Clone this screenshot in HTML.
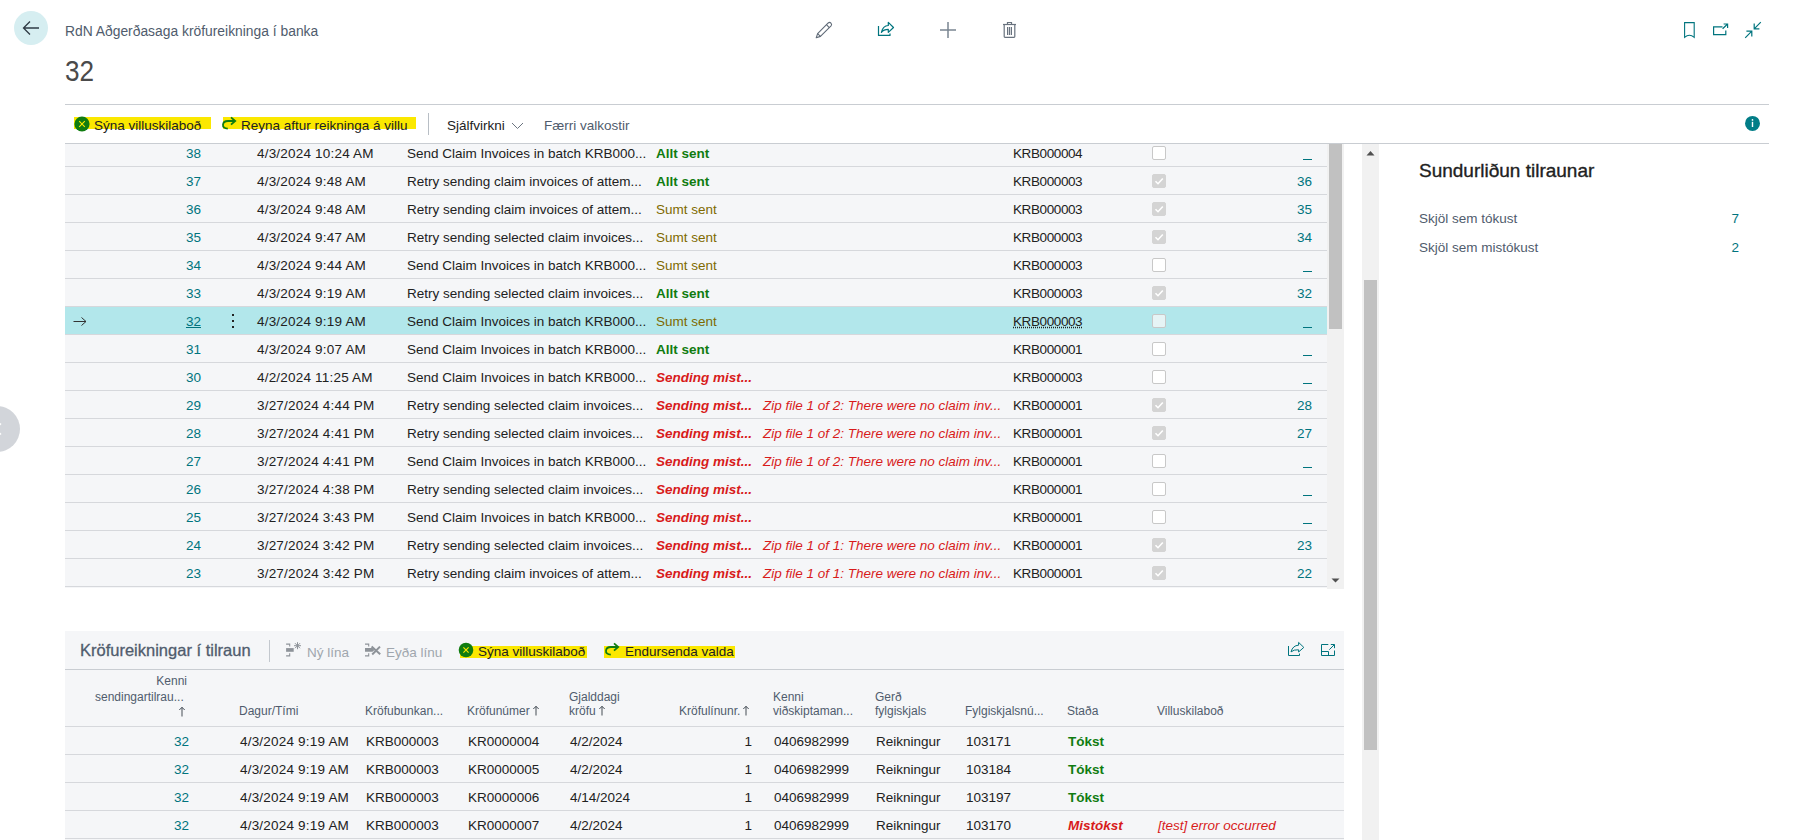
<!DOCTYPE html>
<html><head><meta charset="utf-8"><style>
*{box-sizing:border-box;margin:0;padding:0}
html,body{width:1795px;height:840px;overflow:hidden;background:#fff;font-family:"Liberation Sans",sans-serif;color:#212121}
.a{position:absolute;white-space:nowrap}
.t{font-size:13.5px}
.teal{color:#00747e}
.g{color:#107c10;font-weight:bold}
.o{color:#7f6a00}
.r{color:#d81b1b;font-weight:bold;font-style:italic}
.ri{color:#d81b1b;font-style:italic}
.row{position:absolute;left:65px;width:1262px;height:28px;background:#f5f6f8;border-bottom:1px solid #d6d8dc}
.row .c{position:absolute;top:1px;line-height:27px;font-size:13.5px;white-space:nowrap}
.rt{text-align:right}
.cb{position:absolute;width:14px;height:14px;border:1px solid #c8c8c8;border-radius:2px;background:#fff}
.cb.on{background:#d4d4d4;border-color:#d4d4d4}
.brow{position:absolute;left:65px;width:1279px;height:28px;border-bottom:1px solid #d6d8dc}
.brow .c{position:absolute;top:1px;line-height:27px;font-size:13.5px;white-space:nowrap}
.hd{position:absolute;font-size:12px;color:#505c6d;line-height:16px;white-space:nowrap}
.hl{background:#fbe800}
</style></head>
<body>
<div class="a" style="left:14px;top:11px;width:34px;height:34px;border-radius:50%;background:#d6eef1"></div>
<svg class="a" style="left:22px;top:20px" width="18" height="16" viewBox="0 0 18 16"><path d="M8 1.5 L1.5 8 L8 14.5 M1.5 8 H17" fill="none" stroke="#2f3b45" stroke-width="1.3"/></svg>
<div class="a" style="left:65px;top:22px;font-size:13.85px;line-height:18px;color:#505c6d">RdN Aðgerðasaga kröfureikninga í banka</div>
<div class="a" style="left:65px;top:54px;font-size:29px;line-height:34px;color:#4a4a4a;transform:scaleX(0.9);transform-origin:left">32</div>
<svg class="a" style="left:814px;top:20px" width="20" height="20" viewBox="0 0 20 20"><g fill="none" stroke="#5f6a77" stroke-width="1.1" stroke-linejoin="round"><path d="M2.2 17.8 L3.62 13.56 L14.22 2.96 A2 2 0 0 1 17.04 5.78 L6.44 16.38 Z"/><path d="M3.62 13.56 L6.44 16.38 M12.46 4.72 L15.28 7.54"/></g></svg>
<svg class="a" style="left:876px;top:20px" width="20" height="20" viewBox="0 0 20 20"><g fill="none" stroke="#00747e" stroke-width="1.2" stroke-linejoin="round"><path d="M2.5 6 V15.4 H14 V13.4"/><path d="M5.4 12.4 Q6.8 5.6 12.3 5.5 V2.4 L17.5 7.5 L12.3 12.4 V9.4 Q7.6 9.4 5.4 12.4 Z"/></g></svg>
<svg class="a" style="left:938px;top:20px" width="20" height="20" viewBox="0 0 20 20"><path d="M10 2 V18 M2 10 H18" stroke="#7a8591" stroke-width="1.5"/></svg>
<svg class="a" style="left:999px;top:20px" width="20" height="20" viewBox="0 0 20 20"><g fill="none" stroke="#68727e" stroke-width="1.2"><path d="M4 4.5 H17"/><path d="M8.5 4.5 V2.5 H12.5 V4.5"/><path d="M5.2 4.5 V16.6 Q5.2 17.4 6 17.4 H15 Q15.8 17.4 15.8 16.6 V4.5"/><path d="M8.6 7 V15 M10.5 7 V15 M12.4 7 V15"/></g></svg>
<svg class="a" style="left:1680px;top:20px" width="20" height="20" viewBox="0 0 20 20"><path d="M4.6 2.6 H14.2 V17.4 Q9.4 13.2 4.6 17.4 Z" fill="none" stroke="#00747e" stroke-width="1.1"/></svg>
<svg class="a" style="left:1710px;top:20px" width="20" height="20" viewBox="0 0 20 20"><g fill="none" stroke="#00747e" stroke-width="1.2"><path d="M12.5 6.8 H3.6 V14.6 H15.8 V10.5"/><path d="M12.6 8.8 L17.6 4 M13.6 4 H17.6 V8"/></g></svg>
<svg class="a" style="left:1743px;top:20px" width="20" height="20" viewBox="0 0 20 20"><g fill="none" stroke="#00747e" stroke-width="1.2"><path d="M2.2 17.8 L8.8 11.2 M3.4 11.2 H8.8 V16.4"/><path d="M17.8 2.2 L11.2 8.8 M11.2 3.6 V8.8 H16.4"/></g></svg>
<div class="a" style="left:65px;top:104px;width:1704px;height:1px;background:#c9cdd2"></div>
<div class="a hl" style="left:74px;top:117px;width:137px;height:12px"></div>
<svg class="a" style="left:74px;top:116px" width="16" height="16" viewBox="0 0 16 16"><circle cx="8" cy="8" r="7.6" fill="#107c10"/><path d="M5.2 5.2 L10.8 10.8 M10.8 5.2 L5.2 10.8" stroke="#ffea00" stroke-width="1.1"/></svg>
<div class="a t" style="left:94px;top:117px;line-height:18px">Sýna villuskilaboð</div>
<div class="a hl" style="left:223px;top:117px;width:193px;height:12px"></div>
<svg class="a" style="left:221px;top:116px" width="16" height="14" viewBox="0 0 16 14"><path d="M6.8 12.6 Q1.6 12.2 2 8.6 Q2.4 5 7 5 H13.2 M10 1.4 L14.2 5 L10 8.6" fill="none" stroke="#107c10" stroke-width="1.8"/></svg>
<div class="a t" style="left:241px;top:117px;line-height:18px">Reyna aftur reikninga á villu</div>
<div class="a" style="left:428px;top:113px;width:1px;height:22px;background:#b8bec5"></div>
<div class="a t" style="left:447px;top:117px;line-height:18px">Sjálfvirkni</div>
<svg class="a" style="left:511px;top:121px" width="13" height="9" viewBox="0 0 13 9"><path d="M1 2 L6.5 7.5 L12 2" fill="none" stroke="#6b7480" stroke-width="1"/></svg>
<div class="a t" style="left:544px;top:117px;line-height:18px;color:#505c6d">Færri valkostir</div>
<svg class="a" style="left:1744px;top:115px" width="17" height="17" viewBox="0 0 17 17"><circle cx="8.5" cy="8.4" r="7.5" fill="#027d87"/><rect x="7.8" y="6.8" width="1.4" height="5.2" fill="#fff"/><circle cx="8.5" cy="4.9" r="0.85" fill="#fff"/></svg>
<div class="a" style="left:65px;top:143px;width:1704px;height:1px;background:#c9cdd2"></div>
<div class="a" style="left:65px;top:144px;width:1262px;height:444px;overflow:hidden;background:#f5f6f8">
<div class="row" style="left:0;top:-5px;">
<div class="c rt teal" style="left:80px;width:56px;">38</div>
<div class="c" style="left:192px;letter-spacing:0.2px">4/3/2024 10:24 AM</div>
<div class="c" style="left:342px">Send Claim Invoices in batch KRB000...</div>
<div class="c g" style="left:591px">Allt sent</div>
<div class="c" style="left:948px;letter-spacing:-0.4px;">KRB000004</div>
<div class="cb " style="left:1087px;top:7px;"></div>
<div class="a" style="left:1238px;top:20px;width:9px;height:1.4px;background:#00747e"></div>
</div>
<div class="row" style="left:0;top:23px;">
<div class="c rt teal" style="left:80px;width:56px;">37</div>
<div class="c" style="left:192px;letter-spacing:0.2px">4/3/2024 9:48 AM</div>
<div class="c" style="left:342px">Retry sending claim invoices of attem...</div>
<div class="c g" style="left:591px">Allt sent</div>
<div class="c" style="left:948px;letter-spacing:-0.4px;">KRB000003</div>
<div class="cb on" style="left:1087px;top:7px;"></div>
<svg class="a" style="left:1088px;top:8px" width="12" height="12" viewBox="0 0 12 12"><path d="M2.5 6.2 L5 8.7 L9.8 3.5" fill="none" stroke="#fff" stroke-width="1.6"/></svg>
<div class="c rt teal" style="left:1200px;width:47px">36</div>
</div>
<div class="row" style="left:0;top:51px;">
<div class="c rt teal" style="left:80px;width:56px;">36</div>
<div class="c" style="left:192px;letter-spacing:0.2px">4/3/2024 9:48 AM</div>
<div class="c" style="left:342px">Retry sending claim invoices of attem...</div>
<div class="c o" style="left:591px">Sumt sent</div>
<div class="c" style="left:948px;letter-spacing:-0.4px;">KRB000003</div>
<div class="cb on" style="left:1087px;top:7px;"></div>
<svg class="a" style="left:1088px;top:8px" width="12" height="12" viewBox="0 0 12 12"><path d="M2.5 6.2 L5 8.7 L9.8 3.5" fill="none" stroke="#fff" stroke-width="1.6"/></svg>
<div class="c rt teal" style="left:1200px;width:47px">35</div>
</div>
<div class="row" style="left:0;top:79px;">
<div class="c rt teal" style="left:80px;width:56px;">35</div>
<div class="c" style="left:192px;letter-spacing:0.2px">4/3/2024 9:47 AM</div>
<div class="c" style="left:342px">Retry sending selected claim invoices...</div>
<div class="c o" style="left:591px">Sumt sent</div>
<div class="c" style="left:948px;letter-spacing:-0.4px;">KRB000003</div>
<div class="cb on" style="left:1087px;top:7px;"></div>
<svg class="a" style="left:1088px;top:8px" width="12" height="12" viewBox="0 0 12 12"><path d="M2.5 6.2 L5 8.7 L9.8 3.5" fill="none" stroke="#fff" stroke-width="1.6"/></svg>
<div class="c rt teal" style="left:1200px;width:47px">34</div>
</div>
<div class="row" style="left:0;top:107px;">
<div class="c rt teal" style="left:80px;width:56px;">34</div>
<div class="c" style="left:192px;letter-spacing:0.2px">4/3/2024 9:44 AM</div>
<div class="c" style="left:342px">Send Claim Invoices in batch KRB000...</div>
<div class="c o" style="left:591px">Sumt sent</div>
<div class="c" style="left:948px;letter-spacing:-0.4px;">KRB000003</div>
<div class="cb " style="left:1087px;top:7px;"></div>
<div class="a" style="left:1238px;top:20px;width:9px;height:1.4px;background:#00747e"></div>
</div>
<div class="row" style="left:0;top:135px;">
<div class="c rt teal" style="left:80px;width:56px;">33</div>
<div class="c" style="left:192px;letter-spacing:0.2px">4/3/2024 9:19 AM</div>
<div class="c" style="left:342px">Retry sending selected claim invoices...</div>
<div class="c g" style="left:591px">Allt sent</div>
<div class="c" style="left:948px;letter-spacing:-0.4px;">KRB000003</div>
<div class="cb on" style="left:1087px;top:7px;"></div>
<svg class="a" style="left:1088px;top:8px" width="12" height="12" viewBox="0 0 12 12"><path d="M2.5 6.2 L5 8.7 L9.8 3.5" fill="none" stroke="#fff" stroke-width="1.6"/></svg>
<div class="c rt teal" style="left:1200px;width:47px">32</div>
</div>
<div class="row" style="left:0;top:163px;background:#b2e7eb;">
<svg class="a" style="left:8px;top:10px" width="14" height="9" viewBox="0 0 14 9"><path d="M8.5 0.5 L13 4.5 L8.5 8.5 M0.5 4.5 H13" fill="none" stroke="#333" stroke-width="1"/></svg>
<div class="a" style="left:167px;top:7px;width:2px;height:2px;background:#222"></div><div class="a" style="left:167px;top:13px;width:2px;height:2px;background:#222"></div><div class="a" style="left:167px;top:19px;width:2px;height:2px;background:#222"></div>
<div class="c rt teal" style="left:80px;width:56px;text-decoration:underline;">32</div>
<div class="c" style="left:192px;letter-spacing:0.2px">4/3/2024 9:19 AM</div>
<div class="c" style="left:342px">Send Claim Invoices in batch KRB000...</div>
<div class="c o" style="left:591px">Sumt sent</div>
<div class="c" style="left:948px;letter-spacing:-0.4px;text-decoration:underline dotted;">KRB000003</div>
<div class="cb " style="left:1087px;top:7px;background:#e6f4f5;"></div>
<div class="a" style="left:1238px;top:20px;width:9px;height:1.4px;background:#00747e"></div>
</div>
<div class="row" style="left:0;top:191px;">
<div class="c rt teal" style="left:80px;width:56px;">31</div>
<div class="c" style="left:192px;letter-spacing:0.2px">4/3/2024 9:07 AM</div>
<div class="c" style="left:342px">Send Claim Invoices in batch KRB000...</div>
<div class="c g" style="left:591px">Allt sent</div>
<div class="c" style="left:948px;letter-spacing:-0.4px;">KRB000001</div>
<div class="cb " style="left:1087px;top:7px;"></div>
<div class="a" style="left:1238px;top:20px;width:9px;height:1.4px;background:#00747e"></div>
</div>
<div class="row" style="left:0;top:219px;">
<div class="c rt teal" style="left:80px;width:56px;">30</div>
<div class="c" style="left:192px;letter-spacing:0.2px">4/2/2024 11:25 AM</div>
<div class="c" style="left:342px">Send Claim Invoices in batch KRB000...</div>
<div class="c r" style="left:591px">Sending mist...</div>
<div class="c" style="left:948px;letter-spacing:-0.4px;">KRB000003</div>
<div class="cb " style="left:1087px;top:7px;"></div>
<div class="a" style="left:1238px;top:20px;width:9px;height:1.4px;background:#00747e"></div>
</div>
<div class="row" style="left:0;top:247px;">
<div class="c rt teal" style="left:80px;width:56px;">29</div>
<div class="c" style="left:192px;letter-spacing:0.2px">3/27/2024 4:44 PM</div>
<div class="c" style="left:342px">Retry sending selected claim invoices...</div>
<div class="c r" style="left:591px">Sending mist...</div>
<div class="c ri" style="left:698px">Zip file 1 of 2: There were no claim inv...</div>
<div class="c" style="left:948px;letter-spacing:-0.4px;">KRB000001</div>
<div class="cb on" style="left:1087px;top:7px;"></div>
<svg class="a" style="left:1088px;top:8px" width="12" height="12" viewBox="0 0 12 12"><path d="M2.5 6.2 L5 8.7 L9.8 3.5" fill="none" stroke="#fff" stroke-width="1.6"/></svg>
<div class="c rt teal" style="left:1200px;width:47px">28</div>
</div>
<div class="row" style="left:0;top:275px;">
<div class="c rt teal" style="left:80px;width:56px;">28</div>
<div class="c" style="left:192px;letter-spacing:0.2px">3/27/2024 4:41 PM</div>
<div class="c" style="left:342px">Retry sending selected claim invoices...</div>
<div class="c r" style="left:591px">Sending mist...</div>
<div class="c ri" style="left:698px">Zip file 1 of 2: There were no claim inv...</div>
<div class="c" style="left:948px;letter-spacing:-0.4px;">KRB000001</div>
<div class="cb on" style="left:1087px;top:7px;"></div>
<svg class="a" style="left:1088px;top:8px" width="12" height="12" viewBox="0 0 12 12"><path d="M2.5 6.2 L5 8.7 L9.8 3.5" fill="none" stroke="#fff" stroke-width="1.6"/></svg>
<div class="c rt teal" style="left:1200px;width:47px">27</div>
</div>
<div class="row" style="left:0;top:303px;">
<div class="c rt teal" style="left:80px;width:56px;">27</div>
<div class="c" style="left:192px;letter-spacing:0.2px">3/27/2024 4:41 PM</div>
<div class="c" style="left:342px">Send Claim Invoices in batch KRB000...</div>
<div class="c r" style="left:591px">Sending mist...</div>
<div class="c ri" style="left:698px">Zip file 1 of 2: There were no claim inv...</div>
<div class="c" style="left:948px;letter-spacing:-0.4px;">KRB000001</div>
<div class="cb " style="left:1087px;top:7px;"></div>
<div class="a" style="left:1238px;top:20px;width:9px;height:1.4px;background:#00747e"></div>
</div>
<div class="row" style="left:0;top:331px;">
<div class="c rt teal" style="left:80px;width:56px;">26</div>
<div class="c" style="left:192px;letter-spacing:0.2px">3/27/2024 4:38 PM</div>
<div class="c" style="left:342px">Retry sending selected claim invoices...</div>
<div class="c r" style="left:591px">Sending mist...</div>
<div class="c" style="left:948px;letter-spacing:-0.4px;">KRB000001</div>
<div class="cb " style="left:1087px;top:7px;"></div>
<div class="a" style="left:1238px;top:20px;width:9px;height:1.4px;background:#00747e"></div>
</div>
<div class="row" style="left:0;top:359px;">
<div class="c rt teal" style="left:80px;width:56px;">25</div>
<div class="c" style="left:192px;letter-spacing:0.2px">3/27/2024 3:43 PM</div>
<div class="c" style="left:342px">Send Claim Invoices in batch KRB000...</div>
<div class="c r" style="left:591px">Sending mist...</div>
<div class="c" style="left:948px;letter-spacing:-0.4px;">KRB000001</div>
<div class="cb " style="left:1087px;top:7px;"></div>
<div class="a" style="left:1238px;top:20px;width:9px;height:1.4px;background:#00747e"></div>
</div>
<div class="row" style="left:0;top:387px;">
<div class="c rt teal" style="left:80px;width:56px;">24</div>
<div class="c" style="left:192px;letter-spacing:0.2px">3/27/2024 3:42 PM</div>
<div class="c" style="left:342px">Retry sending selected claim invoices...</div>
<div class="c r" style="left:591px">Sending mist...</div>
<div class="c ri" style="left:698px">Zip file 1 of 1: There were no claim inv...</div>
<div class="c" style="left:948px;letter-spacing:-0.4px;">KRB000001</div>
<div class="cb on" style="left:1087px;top:7px;"></div>
<svg class="a" style="left:1088px;top:8px" width="12" height="12" viewBox="0 0 12 12"><path d="M2.5 6.2 L5 8.7 L9.8 3.5" fill="none" stroke="#fff" stroke-width="1.6"/></svg>
<div class="c rt teal" style="left:1200px;width:47px">23</div>
</div>
<div class="row" style="left:0;top:415px;">
<div class="c rt teal" style="left:80px;width:56px;">23</div>
<div class="c" style="left:192px;letter-spacing:0.2px">3/27/2024 3:42 PM</div>
<div class="c" style="left:342px">Retry sending claim invoices of attem...</div>
<div class="c r" style="left:591px">Sending mist...</div>
<div class="c ri" style="left:698px">Zip file 1 of 1: There were no claim inv...</div>
<div class="c" style="left:948px;letter-spacing:-0.4px;">KRB000001</div>
<div class="cb on" style="left:1087px;top:7px;"></div>
<svg class="a" style="left:1088px;top:8px" width="12" height="12" viewBox="0 0 12 12"><path d="M2.5 6.2 L5 8.7 L9.8 3.5" fill="none" stroke="#fff" stroke-width="1.6"/></svg>
<div class="c rt teal" style="left:1200px;width:47px">22</div>
</div>
</div>
<div class="a" style="left:1327px;top:144px;width:17px;height:445px;background:#f1f1f1"></div>
<div class="a" style="left:1329px;top:144px;width:13px;height:185px;background:#c1c1c1"></div>
<svg class="a" style="left:1331px;top:578px" width="9" height="6" viewBox="0 0 9 6"><path d="M0.5 0.5 H8.5 L4.5 4.5 Z" fill="#505050"/></svg>
<div class="a" style="left:1362px;top:144px;width:17px;height:696px;background:#f1f1f1"></div>
<div class="a" style="left:1364px;top:280px;width:13px;height:470px;background:#c1c1c1"></div>
<svg class="a" style="left:1366px;top:150px" width="9" height="6" viewBox="0 0 9 6"><path d="M0.5 5.5 H8.5 L4.5 1 Z" fill="#505050"/></svg>
<div class="a" style="left:1419px;top:159px;font-size:19px;line-height:24px;color:#212121;-webkit-text-stroke:0.35px #212121">Sundurliðun tilraunar</div>
<div class="a t" style="left:1419px;top:210px;line-height:18px;color:#505c6d">Skjöl sem tókust</div>
<div class="a t teal" style="left:1700px;width:39px;text-align:right;top:210px;line-height:18px">7</div>
<div class="a t" style="left:1419px;top:239px;line-height:18px;color:#505c6d">Skjöl sem mistókust</div>
<div class="a t teal" style="left:1700px;width:39px;text-align:right;top:239px;line-height:18px">2</div>
<div class="a" style="left:-26px;top:406px;width:46px;height:46px;border-radius:50%;background:#d2d5da"></div>
<svg class="a" style="left:-4px;top:422px" width="8" height="14" viewBox="0 0 8 14"><path d="M5 1.5 L-0.5 7 L5 12.5" fill="none" stroke="#fff" stroke-width="1.5"/></svg>
<div class="a" style="left:65px;top:631px;width:1279px;height:209px;background:#f5f6f8"></div>
<div class="a" style="left:80px;top:640px;font-size:16.5px;line-height:20px;color:#505c6d;-webkit-text-stroke:0.3px #505c6d">Kröfureikningar í tilraun</div>
<div class="a" style="left:269px;top:640px;width:1px;height:22px;background:#c3c8ce"></div>
<svg class="a" style="left:284px;top:642px" width="18" height="16" viewBox="0 0 18 16"><g fill="none" stroke="#8e9399" stroke-width="1.1"><path d="M2.1 2.1 H5.7 V4.6 M5.7 11.3 V13.9 H2.1"/><path d="M13.5 0.2 V7.2 M10 3.7 H17 M11 1.2 L16 6.2 M16 1.2 L11 6.2" stroke-width="1"/></g><rect x="2.1" y="6.1" width="7.6" height="3.7" fill="#8e9399"/></svg>
<div class="a t" style="left:307px;top:644px;line-height:18px;color:#a0a6ad">Ný lína</div>
<svg class="a" style="left:363px;top:642px" width="19" height="16" viewBox="0 0 19 16"><g fill="none" stroke="#8e9399" stroke-width="1.1"><path d="M2 2.1 H5.7 V4.6 M5.7 11.3 V13.9 H2"/><path d="M8.6 4.6 L17.2 12.3 M17 4.6 L9.2 12.5" stroke-width="2"/></g><path d="M2 6.1 H9.5 L11.4 8 L9.5 9.8 H2 Z" fill="#8e9399"/></svg>
<div class="a t" style="left:386px;top:644px;line-height:18px;color:#a0a6ad">Eyða línu</div>
<div class="a hl" style="left:460px;top:646px;width:127px;height:12px"></div>
<svg class="a" style="left:458px;top:642px" width="16" height="16" viewBox="0 0 16 16"><circle cx="8" cy="8" r="7.3" fill="#107c10"/><path d="M5.4 5.4 L10.6 10.6 M10.6 5.4 L5.4 10.6" stroke="#ffea00" stroke-width="1.1"/></svg>
<div class="a t" style="left:478px;top:643px;line-height:18px">Sýna villuskilaboð</div>
<div class="a hl" style="left:604px;top:646px;width:131px;height:12px"></div>
<svg class="a" style="left:604px;top:642px" width="16" height="14" viewBox="0 0 16 14"><path d="M6.8 12.6 Q1.6 12.2 2 8.6 Q2.4 5 7 5 H13.2 M10 1.4 L14.2 5 L10 8.6" fill="none" stroke="#107c10" stroke-width="1.8"/></svg>
<div class="a t" style="left:625px;top:643px;line-height:18px">Endursenda valda</div>
<svg class="a" style="left:1286px;top:641px" width="19" height="17" viewBox="0 0 19 17"><g fill="none" stroke="#00747e" stroke-width="1"><path d="M2.5 5 V14.5 H13.5 V12.6"/><path d="M5 10.9 Q6.8 4.4 12.6 4.2 V1.4 L17.8 6.4 L12.6 11 V8.8 Q7.8 8.4 5 10.9 Z" stroke-linejoin="miter"/></g></svg>
<svg class="a" style="left:1319px;top:641px" width="18" height="17" viewBox="0 0 18 17"><g fill="none" stroke="#00747e" stroke-width="1"><path d="M9.3 3.5 H2.5 V14.5 H15.5 V9.5"/><path d="M2.5 10.5 H9.5 V14.5"/><path d="M10.3 8.7 L15.3 3.7 M11.8 3.5 H15.5 V7.2"/></g></svg>
<div class="a" style="left:65px;top:669px;width:1279px;height:1px;background:#c9cdd2"></div>
<div class="a" style="left:65px;top:726px;width:1279px;height:1px;background:#d6d8dc"></div>
<div class="hd" style="left:100px;top:673px;width:87px;text-align:right">Kenni</div>
<div class="hd" style="left:95px;top:689px;">sendingartilrau...</div>
<div class="hd" style="left:178px;top:706px;"><svg width="8" height="11" viewBox="0 0 8 11" style="display:block"><path d="M4 10.5 V1.3 M1.3 4 L4 1.3 L6.7 4" stroke="#3b434d" stroke-width="0.95" fill="none"/></svg></div>
<div class="hd" style="left:239px;top:703px;">Dagur/Tími</div>
<div class="hd" style="left:365px;top:703px;">Kröfubunkan...</div>
<div class="hd" style="left:467px;top:703px;">Kröfunúmer<svg width="8" height="11" viewBox="0 0 8 11" style="vertical-align:-1px;margin-left:2px"><path d="M4 10.5 V1.3 M1.3 4 L4 1.3 L6.7 4" stroke="#3b434d" stroke-width="0.95" fill="none"/></svg></div>
<div class="hd" style="left:569px;top:689px;">Gjalddagi</div>
<div class="hd" style="left:569px;top:703px;">kröfu<svg width="8" height="11" viewBox="0 0 8 11" style="vertical-align:-1px;margin-left:2px"><path d="M4 10.5 V1.3 M1.3 4 L4 1.3 L6.7 4" stroke="#3b434d" stroke-width="0.95" fill="none"/></svg></div>
<div class="hd" style="left:679px;top:703px;">Kröfulínunr.<svg width="8" height="11" viewBox="0 0 8 11" style="vertical-align:-1px;margin-left:2px"><path d="M4 10.5 V1.3 M1.3 4 L4 1.3 L6.7 4" stroke="#3b434d" stroke-width="0.95" fill="none"/></svg></div>
<div class="hd" style="left:773px;top:689px;">Kenni</div>
<div class="hd" style="left:773px;top:703px;">viðskiptaman...</div>
<div class="hd" style="left:875px;top:689px;">Gerð</div>
<div class="hd" style="left:875px;top:703px;">fylgiskjals</div>
<div class="hd" style="left:965px;top:703px;">Fylgiskjalsnú...</div>
<div class="hd" style="left:1067px;top:703px;">Staða</div>
<div class="hd" style="left:1157px;top:703px;">Villuskilaboð</div>
<div class="brow" style="top:727px">
<div class="c rt teal" style="left:35px;width:89px">32</div>
<div class="c" style="left:175px;letter-spacing:0.2px">4/3/2024 9:19 AM</div>
<div class="c" style="left:301px">KRB000003</div>
<div class="c" style="left:403px">KR0000004</div>
<div class="c" style="left:505px">4/2/2024</div>
<div class="c rt" style="left:585px;width:102px">1</div>
<div class="c" style="left:709px">0406982999</div>
<div class="c" style="left:811px">Reikningur</div>
<div class="c" style="left:901px">103171</div>
<div class="c g" style="left:1003px">Tókst</div>
</div>
<div class="brow" style="top:755px">
<div class="c rt teal" style="left:35px;width:89px">32</div>
<div class="c" style="left:175px;letter-spacing:0.2px">4/3/2024 9:19 AM</div>
<div class="c" style="left:301px">KRB000003</div>
<div class="c" style="left:403px">KR0000005</div>
<div class="c" style="left:505px">4/2/2024</div>
<div class="c rt" style="left:585px;width:102px">1</div>
<div class="c" style="left:709px">0406982999</div>
<div class="c" style="left:811px">Reikningur</div>
<div class="c" style="left:901px">103184</div>
<div class="c g" style="left:1003px">Tókst</div>
</div>
<div class="brow" style="top:783px">
<div class="c rt teal" style="left:35px;width:89px">32</div>
<div class="c" style="left:175px;letter-spacing:0.2px">4/3/2024 9:19 AM</div>
<div class="c" style="left:301px">KRB000003</div>
<div class="c" style="left:403px">KR0000006</div>
<div class="c" style="left:505px">4/14/2024</div>
<div class="c rt" style="left:585px;width:102px">1</div>
<div class="c" style="left:709px">0406982999</div>
<div class="c" style="left:811px">Reikningur</div>
<div class="c" style="left:901px">103197</div>
<div class="c g" style="left:1003px">Tókst</div>
</div>
<div class="brow" style="top:811px">
<div class="c rt teal" style="left:35px;width:89px">32</div>
<div class="c" style="left:175px;letter-spacing:0.2px">4/3/2024 9:19 AM</div>
<div class="c" style="left:301px">KRB000003</div>
<div class="c" style="left:403px">KR0000007</div>
<div class="c" style="left:505px">4/2/2024</div>
<div class="c rt" style="left:585px;width:102px">1</div>
<div class="c" style="left:709px">0406982999</div>
<div class="c" style="left:811px">Reikningur</div>
<div class="c" style="left:901px">103170</div>
<div class="c r" style="left:1003px">Mistókst</div>
<div class="c ri" style="left:1093px">[test] error occurred</div>
</div>
</body></html>
